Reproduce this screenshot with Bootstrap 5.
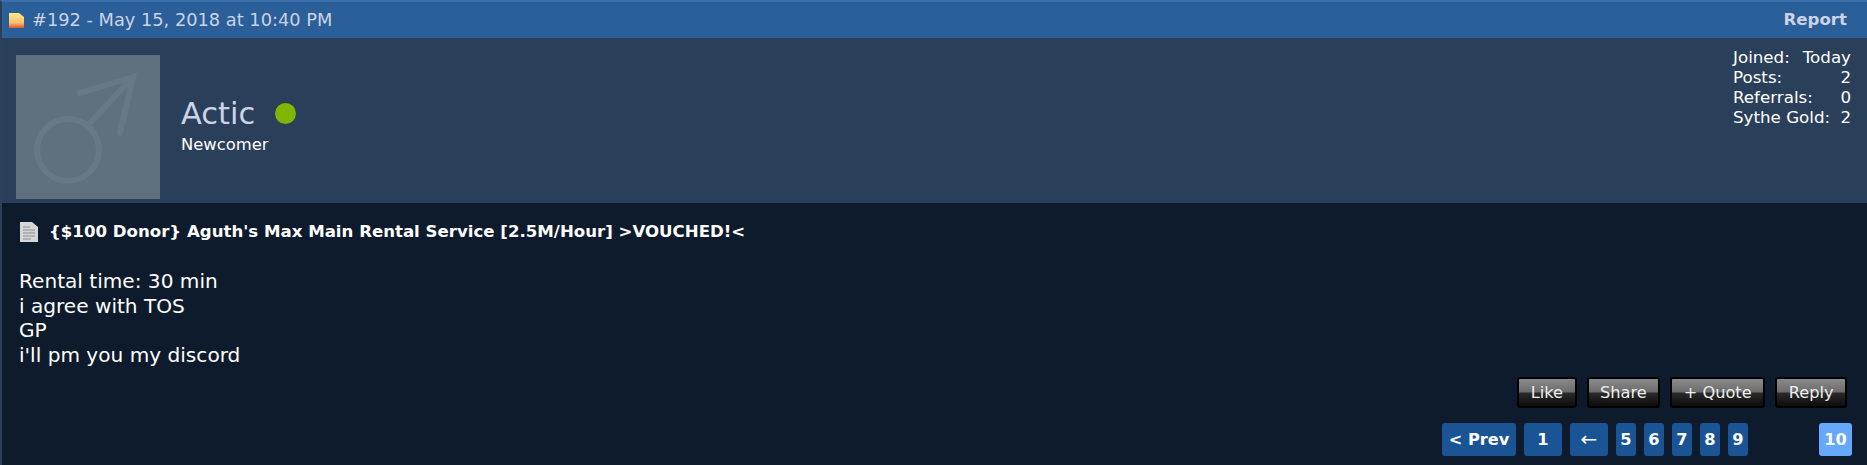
<!DOCTYPE html>
<html lang="en">
<head>
    <meta charset="UTF-8">
    <meta name="viewport" content="width=device-width, initial-scale=1.0">
    <title>Post #192</title>
    <link href="https://cdn.jsdelivr.net/npm/bootstrap@5.3.0/dist/css/bootstrap.min.css" rel="stylesheet">
    <style>
        body {
            background: #0e1b2c;
            color: #fff;
            font-family: "DejaVu Sans", Verdana, sans-serif;
            height: 465px;
            overflow: hidden;
        }
        .post-wrap {
            height: 465px;
            border-left: 2px solid #2d4058;
            border-top: 2px solid #3b6ea8;
        }
        .post-head {
            height: 36px;
            background: #2a5f9a;
            color: #ccd3e6;
            font-size: 17.8px;
            padding: 0 20px 0 7px;
        }
        .report-link {
            color: #ccd3e6;
            font-weight: 700;
            font-size: 16.6px;
            text-decoration: none;
        }
        .user-panel {
            height: 165px;
            background: #2a3f5a;
            padding: 17px 16px 0 14px;
        }
        .avatar-box {
            width: 144px;
            height: 144px;
            background: #60707e;
        }
        .user-info {
            margin-left: 21px;
            margin-top: -4px;
        }
        .user-name {
            font-size: 30.5px;
            line-height: 36px;
            color: #ccd3e6;
        }
        .online-dot {
            width: 21px;
            height: 21px;
            background: #80b600;
            border-radius: 50%;
            margin-left: 20px;
        }
        .user-rank {
            font-size: 16.4px;
            line-height: 20px;
            margin-top: 3px;
        }
        .user-stats {
            font-size: 16.7px;
            line-height: 20px;
            width: 118px;
            margin-top: -8px;
        }
        .post-title {
            font-size: 16.6px;
            font-weight: 700;
            padding: 16px 0 0 18px;
            line-height: 26px;
        }
        .post-title span { margin-left: 3px; }
        .post-text {
            font-size: 20.1px;
            line-height: 24.5px;
            padding: 24px 0 0 17px;
        }
        .post-btns {
            padding-right: 20px;
            margin-top: 10px;
            gap: 10px;
        }
        .post-btn {
            height: 31px;
            padding: 0 11.5px;
            color: #eee;
            font-size: 16.2px;
            line-height: 27px;
            border: 2px solid #000;
            border-radius: 3px;
            background: linear-gradient(#8a8a8a 0, #6c6c6c 48%, #2a2a2a 52%, #0c0c0c 100%);
        }
        .page-row {
            margin-top: 15px;
            padding-right: 15px;
            font-size: 16.2px;
            font-weight: 700;
        }
        .page-num {
            height: 33px;
            min-width: 20px;
            margin-left: 8px;
            padding: 0 4px;
            line-height: 33px;
            text-align: center;
            color: #fff;
            background: #1a5494;
            border-radius: 3px;
            text-decoration: none;
        }
        .page-wide { width: 38px; }
        .page-arrow { font-weight: 400; font-size: 20px; }
        .page-prev { width: 74px; padding: 0; }
        .page-current { background: #66a8fa; width: 33px; margin-left: 71px; padding: 0; }
    </style>
</head>
<body>
    <div class="post-wrap">
        <div class="post-head d-flex align-items-center justify-content-between">
            <div class="d-flex align-items-center gap-2">
                <!-- post status icon -->
                <svg width="15" height="15" viewBox="0 0 15 15">
                    <defs>
                        <linearGradient id="noteFill" x1="0" y1="0" x2="0" y2="1">
                            <stop offset="0" stop-color="#ffe98c"/>
                            <stop offset="0.65" stop-color="#fdc072"/>
                            <stop offset="1" stop-color="#d9542f"/>
                        </linearGradient>
                    </defs>
                    <path d="M0 0h10l5 4v11H0z" fill="url(#noteFill)"/>
                </svg>
                <span>#192 - May 15, 2018 at 10:40 PM</span>
            </div>
            <a href="#" class="report-link">Report</a>
        </div>

        <div class="user-panel d-flex justify-content-between align-items-start">
            <div class="d-flex align-items-center">
                <div class="avatar-box">
                    <svg width="144" height="144" viewBox="0 0 144 144" fill="none" stroke="#687886" stroke-width="6" stroke-linecap="round">
                        <circle cx="52" cy="95" r="31"/>
                        <path d="M74 68 117 22M64 38 117 22 104 78"/>
                    </svg>
                </div>
                <div class="user-info">
                    <div class="d-flex align-items-center">
                        <span class="user-name">Actic</span>
                        <span class="online-dot"></span>
                    </div>
                    <div class="user-rank">Newcomer</div>
                </div>
            </div>
            <div class="user-stats">
                <div class="d-flex justify-content-between"><span>Joined:</span><span>Today</span></div>
                <div class="d-flex justify-content-between"><span>Posts:</span><span>2</span></div>
                <div class="d-flex justify-content-between"><span>Referrals:</span><span>0</span></div>
                <div class="d-flex justify-content-between"><span>Sythe Gold:</span><span>2</span></div>
            </div>
        </div>

        <div class="post-title d-flex align-items-center gap-2">
            <svg width="18" height="20" viewBox="0 0 18 20">
                <path d="M0 0h12l6 5v15H0z" fill="#d6d6d6"/>
                <path d="M3 5h7M3 8h12M3 11h12M3 14h12M3 17h8" stroke="#8b8b8b" stroke-width="1.2"/>
            </svg>
            <span>{$100 Donor} Aguth's Max Main Rental Service [2.5M/Hour] &gt;VOUCHED!&lt;</span>
        </div>

        <div class="post-text">
            Rental time: 30 min<br>
            i agree with TOS<br>
            GP<br>
            i'll pm you my discord
        </div>

        <div class="post-btns d-flex justify-content-end">
            <div class="post-btn">Like</div>
            <div class="post-btn">Share</div>
            <div class="post-btn">+ Quote</div>
            <div class="post-btn">Reply</div>
        </div>

        <div class="page-row d-flex justify-content-end">
            <a href="#" class="page-num page-prev">&lt; Prev</a>
            <a href="#" class="page-num page-wide">1</a>
            <a href="#" class="page-num page-wide page-arrow">←</a>
            <a href="#" class="page-num">5</a>
            <a href="#" class="page-num">6</a>
            <a href="#" class="page-num">7</a>
            <a href="#" class="page-num">8</a>
            <a href="#" class="page-num">9</a>
            <a href="#" class="page-num page-current">10</a>
        </div>
    </div>
    <script src="https://cdn.jsdelivr.net/npm/bootstrap@5.3.0/dist/js/bootstrap.bundle.min.js"></script>
</body>
</html>
